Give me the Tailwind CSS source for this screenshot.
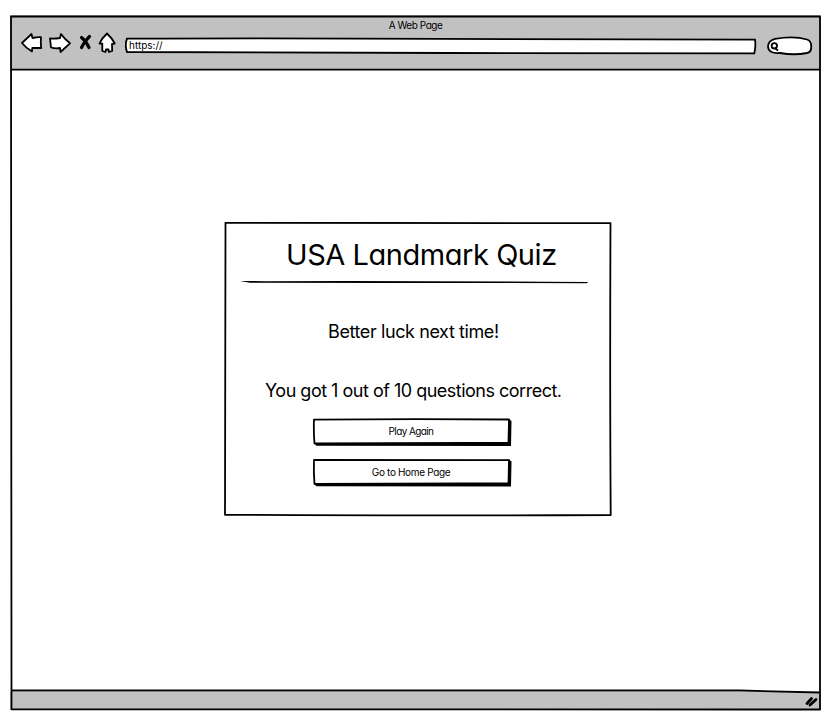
<!DOCTYPE html>
<html lang="en">
<head>
<meta charset="utf-8">
<title>USA Landmark Quiz</title>
<script src="https://cdn.jsdelivr.net/npm/@tailwindcss/browser@4"></script>
</head>
<body class="bg-white text-black w-[839px] h-[727px] overflow-hidden pl-[10px] pt-[15px] font-['Inter','Open_Sans',sans-serif] [font-feature-settings:'cv11'_1,'cv05'_0,'calt'_0]">
<div class="relative w-[811px] h-[696px] flex flex-col">
  <header class="h-[55px] bg-[#c1c1c1] flex flex-col">
    <div class="h-[15px] text-[10px] leading-[20px] text-center tracking-[-0.45px]">A Web Page</div>
    <div class="h-[26px] flex items-start pl-[10px]">
      <svg class="w-[100px] h-[26px] shrink-0" viewBox="20 30 100 26" fill="#fff" stroke="#000" stroke-width="1.8" stroke-linejoin="round" stroke-linecap="round">
        <path d="M22 43 L31.5 34 L32.5 38 Q37 37 41 37.2 Q40.5 43 41.2 48 L32.3 47.8 L32 51.5 Q26 48 22 43Z"/>
        <path d="M50 38.5 Q55 38.8 60 38 L61 34 Q65 39.5 70 43.3 L60.5 52 L60 48 Q55.5 48.8 51 47.5 Q50.5 43 50 38.5Z"/>
        <path fill="none" stroke-width="3.2" d="M81.5 37.5 Q86 41 89 47.5 M89.5 36.5 Q84.5 41 81.5 47.5"/>
        <path d="M107 33.5 Q102 38 99.5 43.5 L102.3 43.7 L102.3 51 L105.5 52 L106 49.5 L108.5 49.5 L109 52 L112.2 51 L112 44 L114.7 43.5 Q112 38 107 33.5Z"/>
      </svg>
      <div class="relative w-[632px] h-[26px] ml-[5px] pt-[10px] pl-[4px]">
        <svg class="absolute inset-0 w-[632px] h-[26px]" viewBox="125 30 632 26" fill="#fff" stroke="#000" stroke-width="1.8"><path d="M127 38.6 Q300 38 440 38.9 T755 39.7 Q756 46 754.3 53.3 Q600 53.8 450 53 T127 52 Q124.5 45 127 38.6Z"/></svg>
        <span class="relative block text-[10px] leading-[11px]">https://</span>
      </div>
      <svg class="w-[48px] h-[26px] ml-[9px] shrink-0" viewBox="766 30 48 26" fill="#fff" stroke="#000" stroke-width="1.8"><path d="M775 38.8 Q794 35.5 807 39.5 Q811.5 41 811.2 47 Q811.5 52 807 53 Q794 55.5 780 53 Q768 54 768 46 Q768.5 40.5 775 38.8Z"/><circle cx="774.3" cy="45.8" r="2.7" fill="none"/><path d="M775 48 L778 50.7"/></svg>
    </div>
  </header>
  <main class="h-[622px] bg-white pt-[152px] pl-[214px]">
    <section class="relative w-[388px] h-[295px] pt-[15px]">
      <svg class="absolute inset-0 w-[388px] h-[295px]" viewBox="224 222 388 295" fill="none" stroke="#000" stroke-width="1.8" stroke-linejoin="round"><path d="M225.5 222.7 Q430 222.3 610.5 223.2 Q609.8 380 610.7 515 Q400 515.8 225 514.8 Q225.8 370 225.5 222.7Z"/></svg>
      <h1 class="relative h-[36px] text-[29px] leading-[36px] whitespace-nowrap pl-[62px] tracking-[-0.45px]">USA Landmark Quiz</h1>
      <svg class="w-[350px] h-[4px] ml-[15px] mt-[7px]" viewBox="239 280 350 4"><path d="M240 281 Q250 280.8 265 281.2 Q430 280.8 588 282 L587 283.3 Q430 282.8 250 282.7Z"/></svg>
      <p class="relative h-[26px] mt-[35px] pl-[104px] text-[18px] leading-[26px] whitespace-nowrap tracking-[-0.4px]">Better luck next time!</p>
      <p class="relative h-[26px] mt-[33px] pl-[41px] text-[18px] leading-[26px] whitespace-nowrap tracking-[-0.5px]">You got 1 out of 10 questions correct.</p>
      <div class="flex flex-col gap-[12px] pl-[88px] mt-[14px]">
        <button class="relative w-[200px] h-[29px] pb-[3px] pr-[2px] text-[10px] leading-[24px] tracking-[-0.6px]">
          <svg class="absolute inset-0 w-[200px] h-[29px]" viewBox="312 418 200 29"><path d="M315 443 L316 445.8 L511 446 L511.5 421 L509 419Z"/><path fill="#fff" stroke="#000" stroke-width="1.8" stroke-linejoin="round" d="M314 419.6 Q410 418.7 509 419.5 L508.5 443 Q410 442.8 314.5 443.5 Q313.5 432 314 419.6Z"/></svg>
          <span class="relative">Play Again</span>
        </button>
        <button class="relative w-[200px] h-[29px] pb-[3px] pr-[2px] text-[10px] leading-[24px] tracking-[-0.34px]">
          <svg class="absolute inset-0 w-[200px] h-[29px]" viewBox="312 418 200 29"><path d="M315 442.5 L316 445.3 L511 445.5 L511.5 420.5 L509 418.5Z"/><path fill="#fff" stroke="#000" stroke-width="1.8" stroke-linejoin="round" d="M314 419 Q410 418.7 509 419.2 L508.5 442.5 Q410 442.3 314.5 443 Q313.5 432 314 419Z"/></svg>
          <span class="relative">Go to Home Page</span>
        </button>
      </div>
    </section>
  </main>
  <footer class="h-[18px] bg-[#c1c1c1]"></footer>
  <svg class="absolute inset-0 w-[811px] h-[696px] pointer-events-none" viewBox="10 15 811 696" fill="none" stroke="#000" stroke-width="1.8" stroke-linejoin="round"><path fill="#fff" stroke="none" d="M740 688 L820 688 L820 692.5 L740 690.5Z"/><path d="M11 16.5 Q400 16 820 16.5 Q819.5 350 820 709.5 Q400 709 11.5 709.3 Q10.8 350 11 16.5Z M11 69.5 Q400 70.3 820 69.7 M11 690.5 Q400 690 740 690.5 L820 692.5"/><path stroke-width="2.8" stroke-linecap="round" d="M807 703.5 L811.5 698.5 M810 705 L816 699.5"/></svg>
</div>
</body>
</html>
